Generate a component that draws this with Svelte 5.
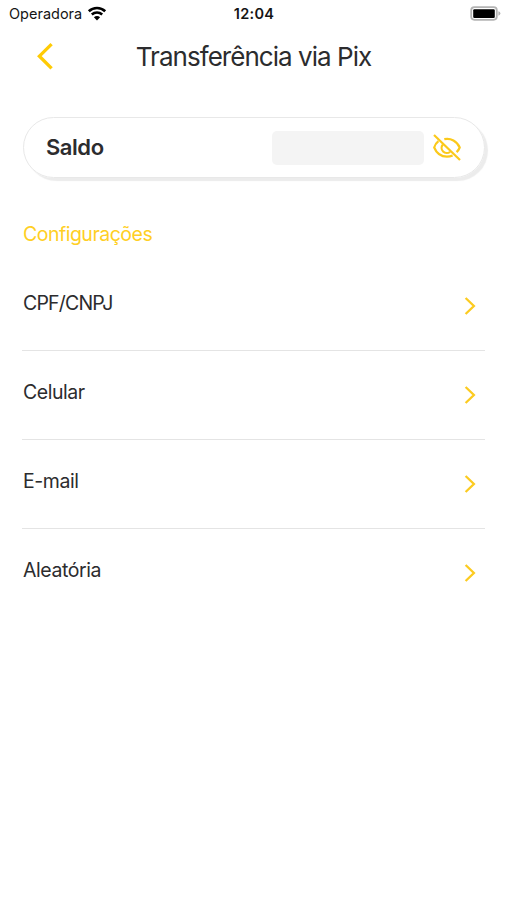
<script>
  const items = [
    { label: 'CPF/CNPJ', spacing: '-0.8px' },
    { label: 'Celular', spacing: '-0.45px' },
    { label: 'E-mail', spacing: '-0.45px' },
    { label: 'Aleatória', spacing: '-0.42px' }
  ];
</script>

<div class="screen">
  <div class="status">
    <div class="carrier">
      <span>Operadora</span>
      <svg width="20" height="15" viewBox="0 0 20 15" fill="none" stroke="#000">
        <path d="M1.8 5.3C6.4.9 13.6.9 18.2 5.3" stroke-width="2.6" />
        <path d="M4.8 8.5C7.8 5.8 12.2 5.8 15.2 8.5" stroke-width="2.5" />
        <path d="M10 14.4 6.9 11.3C8.7 9.7 11.3 9.7 13.1 11.3Z" fill="#000" stroke="none" />
      </svg>
    </div>
    <span class="time">12:04</span>
    <svg class="battery" width="31" height="16" viewBox="0 0 31 16">
      <rect x="1.2" y="1.2" width="25.6" height="12.6" rx="3.2" fill="#fff" stroke="#b4b4b4" stroke-width="1.8" />
      <rect x="3.2" y="3.2" width="21.6" height="8.8" rx="1.2" fill="#000" />
      <path d="M28.4 5.3q2 .6 2 2.2t-2 2.2z" fill="#b4b4b4" />
    </svg>
  </div>

  <header>
    <svg class="back" width="20" height="28" viewBox="0 0 20 28" fill="none" stroke="#ffcb05" stroke-width="3.3">
      <path d="M16.6 2.1 4.4 14.2 16.6 26.3" />
    </svg>
    <h1>Transferência via Pix</h1>
  </header>

  <section class="card">
    <strong>Saldo</strong>
    <div class="masked"></div>
    <svg class="eye" width="30" height="30" viewBox="0 0 30 30" fill="none" stroke="#fbc91b" stroke-width="2.2">
      <path d="M2 2 28 27" />
      <path d="M6.4 8.2C4.2 10 2.8 12.200 2.200 14.500 4.700 20.700 9.200 23.600 15 23.600c2 0 3.900-.4 5.600-1.200" />
      <path d="M12.300 6.200c6.500-1.400 12.800 2 15.400 8.300-.7 1.800-1.700 3.300-3.100 4.600" />
      <path d="M10.900 11.500a5.100 5.100 0 0 0 7.200 7.200" />
    </svg>
  </section>

  <h2>Configurações</h2>
  <ul>
    {#each items as item}
      <li>
        <span style="letter-spacing: {item.spacing}">{item.label}</span>
        <svg width="12" height="20" viewBox="0 0 12 20" fill="none" stroke="#fccb20" stroke-width="2.3">
          <path d="M1.6 2 9.900 10 1.600 18" />
        </svg>
      </li>
    {/each}
  </ul>
</div>

<style>
  :global(body) { margin: 0; background: #fff; }
  .screen {
    box-sizing: border-box;
    width: 507px;
    height: 900px;
    overflow: hidden;
    background: #fff;
    color: #2c2c2e;
    font-family: Inter, "Liberation Sans", sans-serif;
  }
  .status {
    display: grid;
    grid-template-columns: 1fr auto 1fr;
    align-items: center;
    height: 28px;
    padding: 0 6px 0 9px;
    color: #151515;
    font-size: 14.5px;
  }
  .carrier { display: flex; align-items: center; gap: 5px; margin-top: -2px; }
  .time { margin: -2px 2px 0 0; font-weight: 600; letter-spacing: 0.3px; }
  .battery { justify-self: end; margin-top: -1px; }
  header {
    display: grid;
    grid-template-columns: 1fr auto 1fr;
    align-items: center;
    height: 56px;
  }
  .back { margin-left: 35px; }
  h1 {
    margin: 1px 0 0;
    font-size: 26px;
    line-height: 32px;
    font-weight: 400;
    letter-spacing: -0.96px;
  }
  .card {
    box-sizing: border-box;
    display: flex;
    align-items: center;
    width: 462px;
    height: 61px;
    margin: 33px 0 0 23px;
    padding: 0 22px 0 22px;
    border: 1px solid #e8e8e8;
    border-radius: 31px;
    box-shadow: 3px 3px 1px #ececec;
  }
  strong { flex: 1; margin-top: -1px; font-size: 22px; font-weight: 600; letter-spacing: -0.45px; }
  .masked { width: 152px; height: 34px; margin-right: 8px; border-radius: 5px; background: #f4f4f4; }
  h2 {
    margin: 43px 0 0 23px;
    color: #ffcf24;
    font-size: 19.5px;
    line-height: 26px;
    font-weight: 400;
    letter-spacing: -0.5px;
  }
  ul { width: 463px; margin: 15px 0 0 22px; padding: 0; list-style: none; }
  li {
    box-sizing: border-box;
    display: flex;
    justify-content: space-between;
    align-items: center;
    height: 89px;
    padding: 0 9px 0 1px;
    border-bottom: 1px solid #e4e4e4;
    font-size: 19.5px;
  }
  li:last-child { border-color: transparent; }
  li span { margin-top: -6px; }
</style>
